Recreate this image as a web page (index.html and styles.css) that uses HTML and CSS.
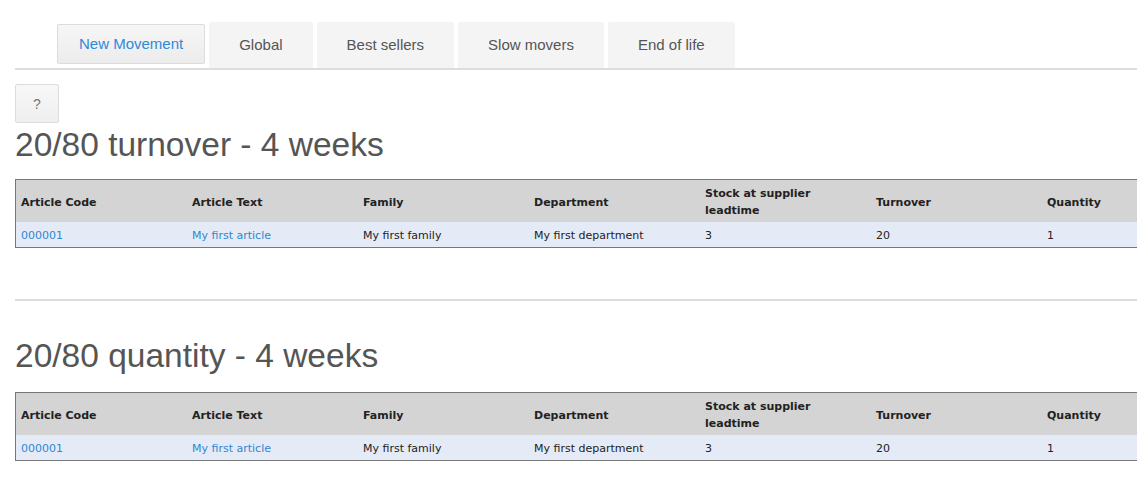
FILE: index.html
```html
<!DOCTYPE html>
<html>
<head>
<meta charset="utf-8">
<link rel="stylesheet" href="styles.css">
</head>
<body>
<div class="page">
  <ul class="tabs">
    <li class="tab active">New Movement</li>
    <li class="tab">Global</li>
    <li class="tab">Best sellers</li>
    <li class="tab">Slow movers</li>
    <li class="tab">End of life</li>
  </ul>
  <button class="help">?</button>
  <h1 class="title">20/80 turnover - 4 weeks</h1>
  <table class="grid">
    <thead>
      <tr><th>Article Code</th><th>Article Text</th><th>Family</th><th>Department</th><th>Stock at supplier leadtime</th><th>Turnover</th><th>Quantity</th></tr>
    </thead>
    <tbody>
      <tr><td><a href="#">000001</a></td><td><a href="#">My first article</a></td><td>My first family</td><td>My first department</td><td>3</td><td>20</td><td>1</td></tr>
    </tbody>
  </table>
  <hr class="sep">
  <h1 class="title second">20/80 quantity - 4 weeks</h1>
  <table class="grid">
    <thead>
      <tr><th>Article Code</th><th>Article Text</th><th>Family</th><th>Department</th><th>Stock at supplier leadtime</th><th>Turnover</th><th>Quantity</th></tr>
    </thead>
    <tbody>
      <tr><td><a href="#">000001</a></td><td><a href="#">My first article</a></td><td>My first family</td><td>My first department</td><td>3</td><td>20</td><td>1</td></tr>
    </tbody>
  </table>
</div>
</body>
</html>
```
FILE: styles.css
```css
html { overflow: hidden; }
body {
  margin: 0;
  background: #fff;
  font-family: "Liberation Sans", Arial, sans-serif;
  color: #555;
}
.page {
  padding-left: 15px;
  width: 1300px;
}
.tabs {
  list-style: none;
  margin: 22px 0 0 0;
  padding: 0 0 0 42px;
  display: flex;
  align-items: flex-start;
  gap: 4px;
  border-bottom: 2px solid #dddddd;
}
.tab {
  height: 46px;
  line-height: 45px;
  padding: 0 30px;
  background: #f4f4f4;
  font-size: 15px;
  color: #555;
  border-radius: 2px 2px 0 0;
}
.tab.active {
  margin-top: 2px;
  height: 38px;
  line-height: 38px;
  padding: 0 21px;
  border: 1px solid #dcdcdc;
  border-radius: 2px;
  background: linear-gradient(#f6f6f6, #ececec);
  color: #2e89d8;
}
.help {
  display: block;
  margin-top: 14px;
  width: 44px;
  height: 39px;
  padding: 0;
  border: 1px solid #dcdcdc;
  border-radius: 2px;
  background: linear-gradient(#f7f7f7, #efefef);
  font-family: "Liberation Sans", Arial, sans-serif;
  font-size: 14px;
  color: #777;
}
.title {
  margin: 4px 0 16px 0;
  font-size: 33.5px;
  line-height: 36px;
  font-weight: normal;
  color: #555;
}
.grid {
  border-collapse: collapse;
  table-layout: fixed;
  width: 1197px;
  border: 1px solid #777;
  font-family: "DejaVu Sans", Verdana, sans-serif;
  font-size: 11px;
  color: #222;
}
.grid th {
  width: 161px;
  background: #d4d4d4;
  text-align: left;
  font-weight: bold;
  padding: 5px 5px 3px 5px;
  line-height: 17px;
  height: 34px;
}
.grid td {
  background: #e5ebf6;
  padding: 5px 5px 3px 5px;
  line-height: 17px;
}
.grid a {
  color: #2e86d4;
  text-decoration: none;
}
.sep {
  margin: 51px 0 0 0;
  border: 0;
  border-top: 2px solid #dddddd;
  height: 0;
}
.title.second {
  margin-top: 37px;
  margin-bottom: 18px;
}
```
